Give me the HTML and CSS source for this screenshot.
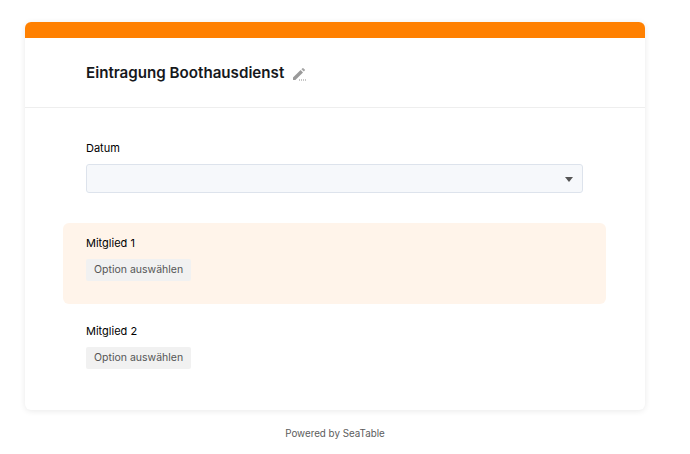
FILE: index.html
```html
<!DOCTYPE html>
<html lang="de">
<head>
<meta charset="utf-8">
<title>Eintragung Boothausdienst</title>
<link rel="stylesheet" href="styles.css">
</head>
<body>
<main class="card">
  <div class="stripe"></div>
  <header class="head">
    <h1 class="title">Eintragung Boothausdienst</h1>
    <svg class="pencil" width="14" height="14" viewBox="0 0 14 14" aria-hidden="true">
      <path d="M1 10.6 8.6 3l2.4 2.4L3.4 13H1z" fill="#9a9a9a"/>
      <path d="M9.4 2.2l1-1a.7.7 0 0 1 1 0l1.4 1.4a.7.7 0 0 1 0 1l-1 1z" fill="#a6a6a6"/>
      <path d="M7 13h1M9 13h1M11 13h1M13 13h1" stroke="#8f8f8f" stroke-width="1"/>
    </svg>
  </header>
  <section class="body">
    <div class="field field-date">
      <label class="label">Datum</label>
      <div class="select"><span class="caret"></span></div>
    </div>
    <div class="field field-active">
      <label class="label">Mitglied 1</label>
      <span class="option">Option auswählen</span>
    </div>
    <div class="field field-plain">
      <label class="label">Mitglied 2</label>
      <span class="option">Option auswählen</span>
    </div>
  </section>
</main>
<footer class="foot">Powered by SeaTable</footer>
</body>
</html>
```
FILE: styles.css
```css
* { box-sizing: border-box; }
html, body { height: 100%; }
body {
  margin: 0;
  padding: 22px 45px 0 25px;
  background: #fff;
  font-family: Inter, "Liberation Sans", sans-serif;
  color: #212529;
  overflow: hidden;
}
.card {
  width: 620px;
  height: 388px;
  border-radius: 6px;
  background: #fff;
  box-shadow: 0 1px 6px rgba(0, 0, 0, 0.09);
  overflow: hidden;
}
.stripe { height: 16px; background: #ff8000; }
.head {
  height: 70px;
  padding: 0 61px;
  display: flex;
  align-items: center;
  gap: 8px;
  border-bottom: 1px solid #eeeeee;
}
.title {
  margin: 0;
  font-size: 15.15px;
  font-weight: 600;
  line-height: 20px;
  color: #16181c;
}
.pencil { margin-top: 2px; }
.body { padding: 30px 39px 0 38px; }
.field { padding: 0 23px; }
.label {
  display: block;
  font-size: 11px;
  font-weight: 400;
  line-height: 20px;
  color: #000;
}
.select {
  margin-top: 6px;
  height: 29px;
  display: flex;
  align-items: center;
  justify-content: flex-end;
  padding-right: 9px;
  background: #f6f8fb;
  border: 1px solid #dde3ec;
  border-radius: 3px;
}
.caret {
  width: 0;
  height: 0;
  border-left: 4px solid transparent;
  border-right: 4px solid transparent;
  border-top: 5px solid #555;
  margin-top: 1px;
}
.field-active {
  margin-top: 30px;
  height: 81px;
  padding-top: 10px;
  background: #fff4ea;
  border-radius: 6px;
}
.field-plain { margin-top: 17px; }
.option {
  display: inline-block;
  margin-top: 6px;
  padding: 0 8px;
  height: 22px;
  font-size: 10.5px;
  line-height: 22px;
  color: #555;
  background: #f1f1f1;
  border-radius: 2px;
}
.foot {
  width: 620px;
  margin-top: 17px;
  text-align: center;
  font-size: 9.8px;
  line-height: 14px;
  color: #5c5c5c;
}
```
